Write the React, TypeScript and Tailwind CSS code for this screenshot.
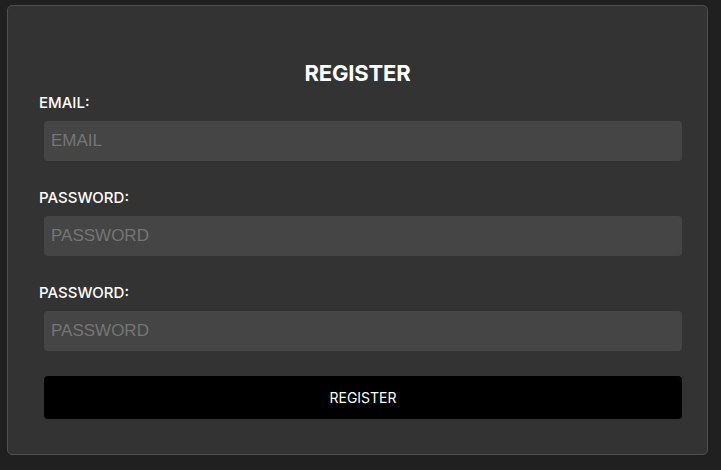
import React from "react";

export default function App() {
  const font = { fontFamily: "Inter, 'Noto Sans', sans-serif" };
  return (
    <div className="w-[721px] h-[470px] bg-[#202020] pt-[5px] pl-[7px]" style={font}>
      <div className="w-[701px] h-[450px] bg-[#333333] border border-[#4f4f4f] rounded-[5px] pt-[52px]">
        <h1 className="text-center text-white font-bold text-[22px] leading-[30px] tracking-[-0.2px]">REGISTER</h1>
        <div className="pl-[31px] mt-[5px] flex flex-col">
          <label className="text-white text-[15px] leading-[20px] font-medium">EMAIL:</label>
          <input
            className="mt-[8px] ml-[5px] w-[638px] h-[40px] rounded-[4px] bg-[#454545] px-[7px] text-[17px] text-white outline-none placeholder:text-[#757575]"
            style={{ fontFamily: "'Liberation Sans', Arial, sans-serif" }}
            placeholder="EMAIL"
          />
          <label className="mt-[27px] text-white text-[15px] leading-[20px] font-medium">PASSWORD:</label>
          <input
            type="password"
            className="mt-[8px] ml-[5px] w-[638px] h-[40px] rounded-[4px] bg-[#454545] px-[7px] text-[17px] text-white outline-none placeholder:text-[#757575]"
            style={{ fontFamily: "'Liberation Sans', Arial, sans-serif" }}
            placeholder="PASSWORD"
          />
          <label className="mt-[27px] text-white text-[15px] leading-[20px] font-medium">PASSWORD:</label>
          <input
            type="password"
            className="mt-[8px] ml-[5px] w-[638px] h-[40px] rounded-[4px] bg-[#454545] px-[7px] text-[17px] text-white outline-none placeholder:text-[#757575]"
            style={{ fontFamily: "'Liberation Sans', Arial, sans-serif" }}
            placeholder="PASSWORD"
          />
          <button className="mt-[25px] ml-[5px] w-[638px] h-[43px] rounded-[4px] bg-black text-white text-[14px]">
            REGISTER
          </button>
        </div>
      </div>
    </div>
  );
}
